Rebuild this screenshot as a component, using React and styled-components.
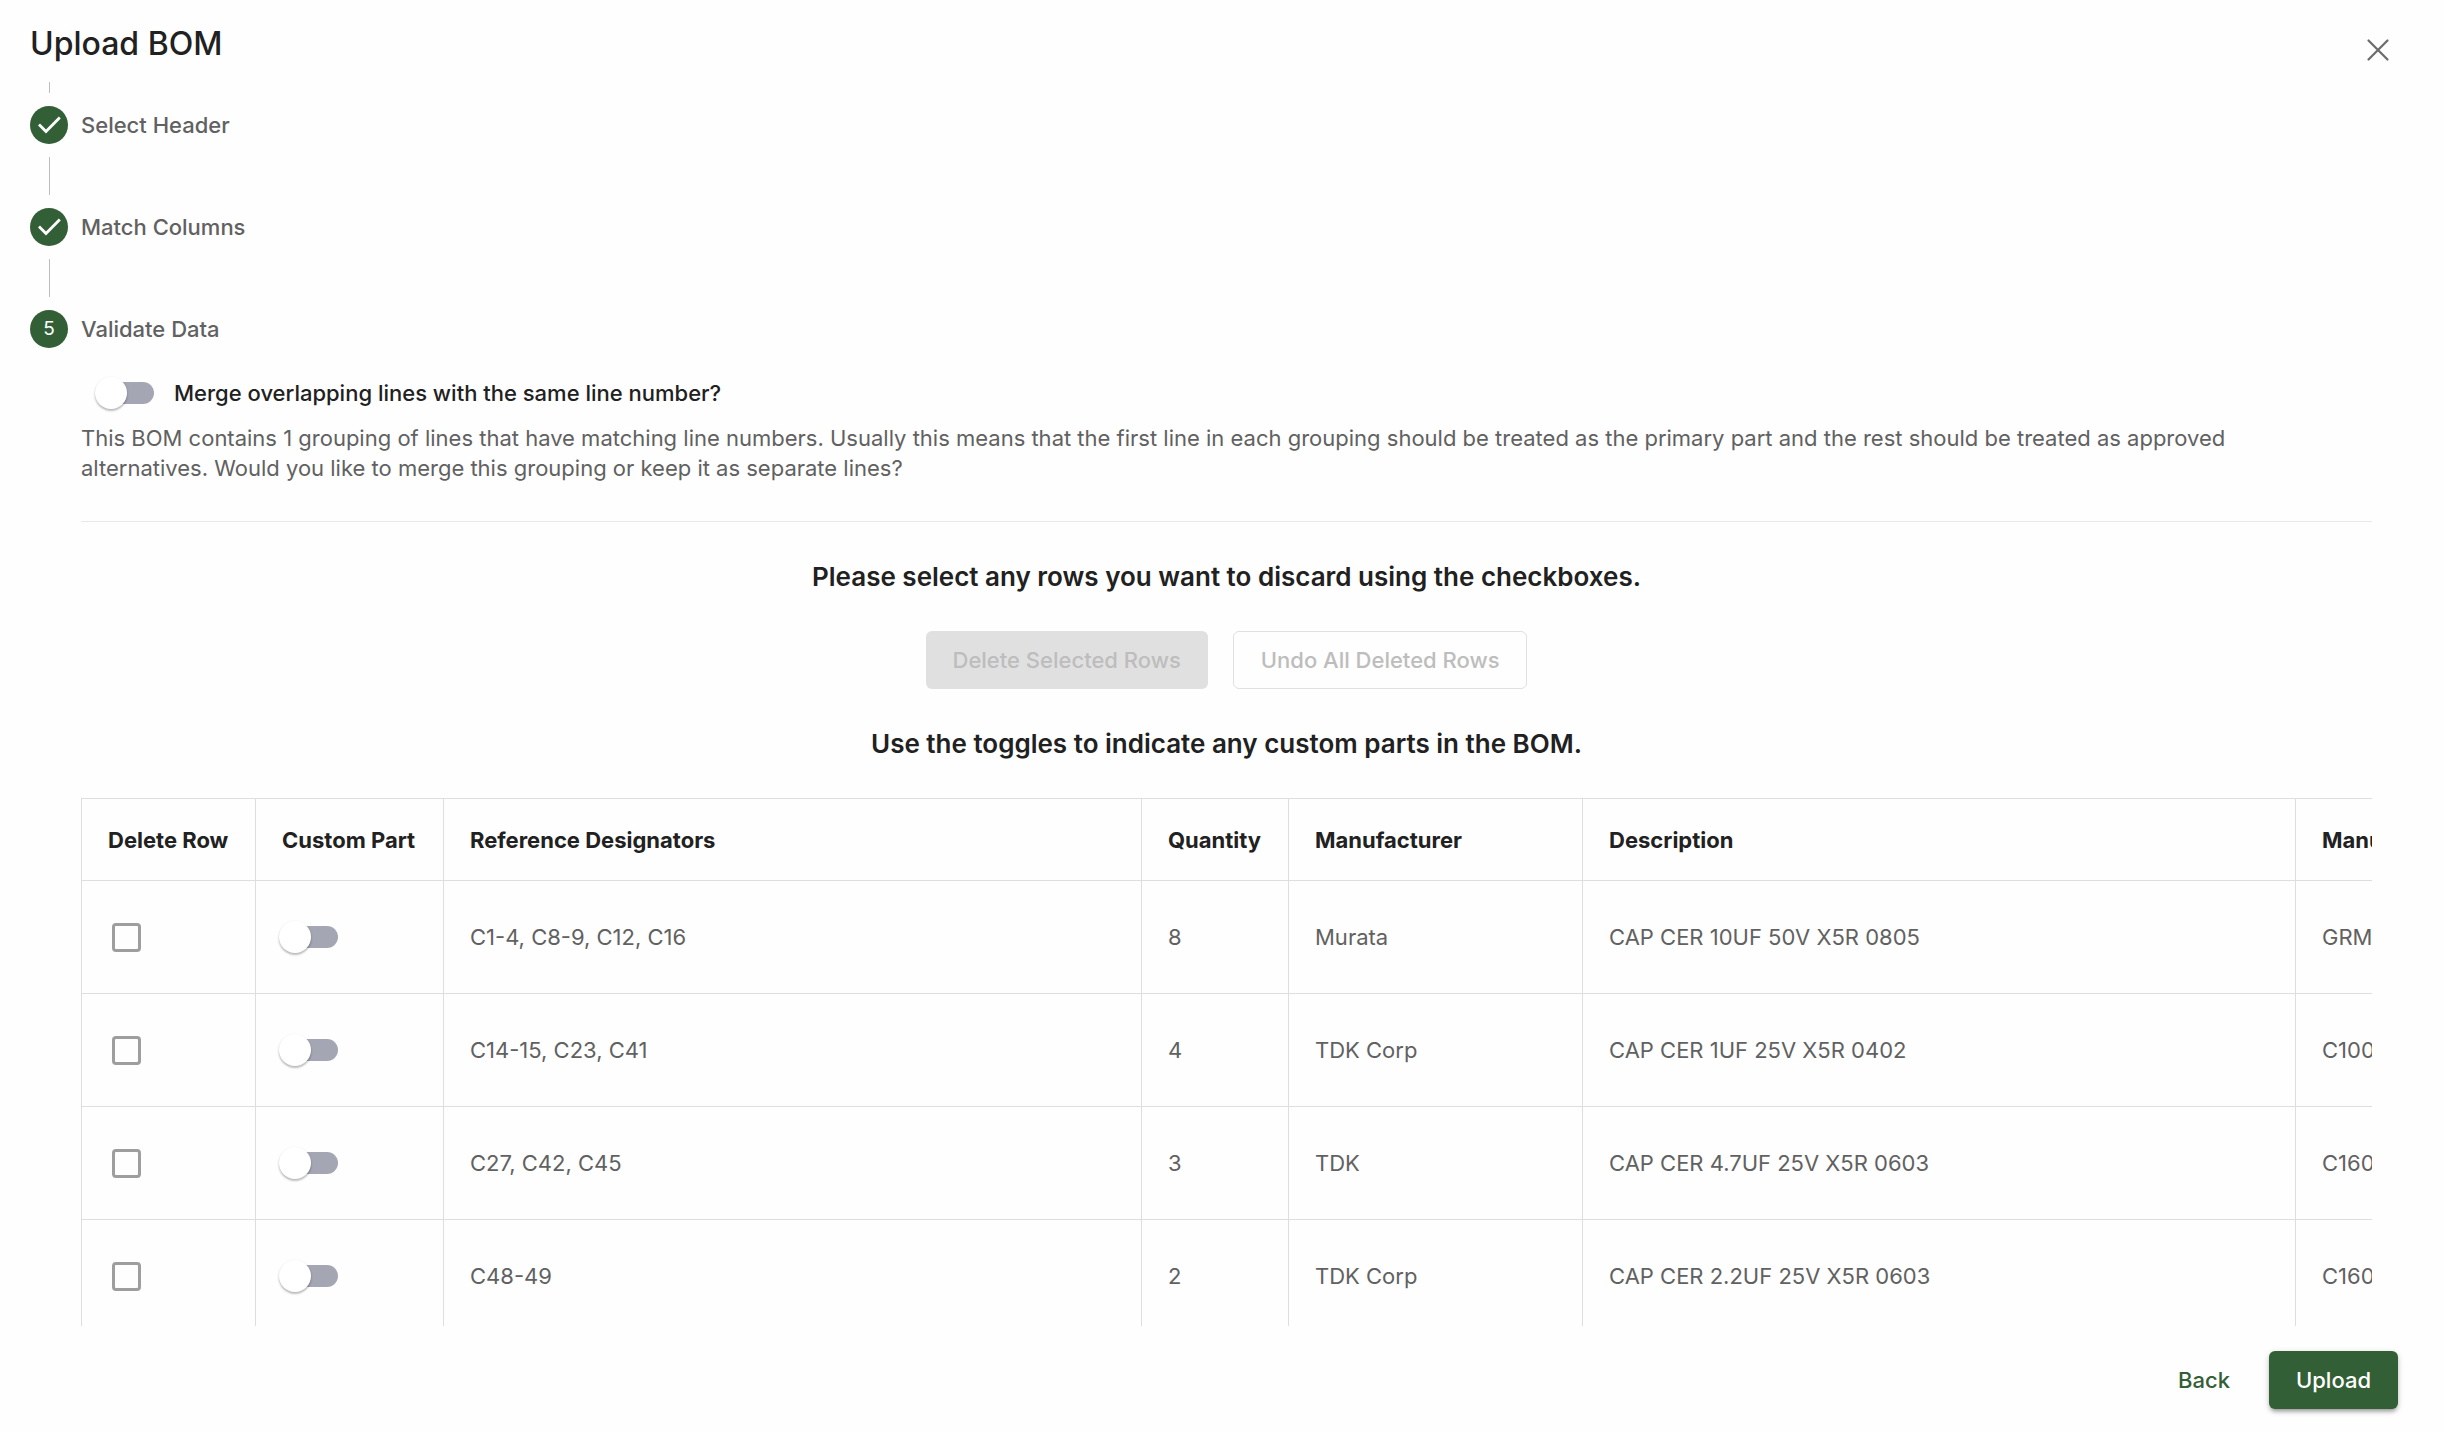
import React, { useState } from 'react';
import styled, { createGlobalStyle, css } from 'styled-components';

const GlobalStyle = createGlobalStyle`
	* {
		box-sizing: border-box;
	}

	body {
		margin: 0;
		background: #fefefe;
		color: #212121;
		font-family: Inter, 'Liberation Sans', sans-serif;
		font-size: 22px;
		line-height: 30px;
	}
`;

const Dialog = styled.div`
	height: 100vh;
	display: flex;
	flex-direction: column;
`;

const Header = styled.header`
	height: 82px;
	flex: none;
	display: flex;
	justify-content: space-between;
	align-items: flex-start;
	padding: 24px 46px 0 30px;
`;

const Title = styled.h1`
	margin: 0;
	font-size: 32px;
	font-weight: 500;
	line-height: 40px;
`;

const CloseButton = styled.button`
	width: 40px;
	height: 40px;
	display: flex;
	align-items: center;
	justify-content: center;
	margin-top: 6px;
	padding: 0;
	border: none;
	background: none;
	color: #6b6b6b;
	cursor: pointer;
`;

const Content = styled.main`
	flex: 1;
	min-height: 0;
	overflow: hidden;
	padding: 0 72px 0 30px;
`;

const Connector = styled.div`
	height: ${(props) => (props.$short ? 11 : 38)}px;
	width: 1px;
	margin-left: 19px;
	background: #bdbdbd;
`;

const Step = styled.div`
	display: flex;
	align-items: center;
	gap: 13px;
	padding: 13px 0;
	color: #616161;
	font-weight: 500;
`;

const StepIcon = styled.span`
	width: 38px;
	height: 38px;
	display: flex;
	align-items: center;
	justify-content: center;
	border-radius: 50%;
	background: #335f37;
	color: #fff;
	font-size: 19px;
	font-weight: 400;
`;

const Panel = styled.section`
	padding: 16px 0 0 51px;
`;

const MergeRow = styled.label`
	display: flex;
	align-items: center;
	gap: 20px;
	padding-left: 14px;
	font-weight: 500;
`;

const Switch = styled.input`
	appearance: none;
	position: relative;
	display: block;
	width: 59px;
	height: 32px;
	margin: 0;
	cursor: pointer;

	&::before {
		content: '';
		position: absolute;
		inset: 5px 0 5px 5px;
		border-radius: 11px;
		background: #a4a6b3;
	}

	&::after {
		content: '';
		position: absolute;
		top: 0;
		left: 0;
		width: 32px;
		height: 32px;
		border-radius: 50%;
		background: #fff;
		box-shadow: 0 2px 2px rgba(0, 0, 0, 0.2), 0 1px 3px rgba(0, 0, 0, 0.12);
	}

	&:checked::before {
		background: #8fae91;
	}

	&:checked::after {
		left: 27px;
		background: #335f37;
	}
`;

const Checkbox = styled.input`
	appearance: none;
	display: block;
	width: 29px;
	height: 29px;
	margin: 0 0 0 4px;
	border: 3px solid #9e9e9e;
	border-radius: 4px;
	cursor: pointer;

	&:checked {
		border-color: #335f37;
		background: #335f37;
	}
`;

const Note = styled.p`
	margin: 14px 0 38px;
	padding-right: 52px;
	color: #616161;
`;

const Divider = styled.hr`
	margin: 0;
	border: none;
	border-top: 1px solid #e8e8e8;
`;

const Instructions = styled.div`
	display: flex;
	flex-direction: column;
	align-items: center;
	gap: 36px;
	padding: 36px 0;
`;

const Subtitle = styled.h2`
	margin: 0;
	font-size: 26px;
	font-weight: 600;
	line-height: 37px;
`;

const Actions = styled.div`
	display: flex;
	align-items: flex-start;
	gap: 25px;
`;

const Button = styled.button`
	height: 58px;
	padding: 0 27px;
	border: none;
	border-radius: 6px;
	background: none;
	color: #335f37;
	font: inherit;
	font-weight: 500;
	cursor: pointer;

	${(props) =>
		props.$variant === 'contained' &&
		css`
			background: #335f37;
			color: #fff;
			box-shadow: 0 4px 4px -2px rgba(0, 0, 0, 0.3), 0 2px 6px rgba(0, 0, 0, 0.2);
		`}

	${(props) =>
		props.$variant === 'outlined' &&
		css`
			border: 1px solid #335f37;
		`}

	&:disabled {
		border-color: #e0e0e0;
		color: #bdbdbd;
		box-shadow: none;
		cursor: default;
		${(props) => props.$variant === 'contained' && 'background: #e0e0e0;'}
	}
`;

const TableWrap = styled.div`
	overflow: hidden;
`;

const Table = styled.table`
	width: 2660px;
	table-layout: fixed;
	border-collapse: separate;
	border-spacing: 0;
	border-top: 1px solid #dedede;
`;

const Col = styled.col`
	width: ${(props) => props.$width}px;
`;

const cell = css`
	padding: 0 26px;
	border-left: 1px solid #dedede;
	border-bottom: 1px solid #dedede;
	text-align: left;
	white-space: nowrap;
`;

const Th = styled.th`
	${cell}
	height: 82px;
	font-weight: 700;
`;

const Td = styled.td`
	${cell}
	height: 113px;
	color: #616161;

	${Switch} {
		margin-left: -3px;
	}
`;

const Footer = styled.footer`
	flex: none;
	display: flex;
	justify-content: flex-end;
	gap: 12px;
	padding: 25px 46px 23px;
`;

const columns = [
	{ label: 'Delete Row', width: 174 },
	{ label: 'Custom Part', width: 188 },
	{ label: 'Reference Designators', width: 698 },
	{ label: 'Quantity', width: 147 },
	{ label: 'Manufacturer', width: 294 },
	{ label: 'Description', width: 713 },
	{ label: 'Manufacturer Part Number', width: 446 },
];

const rows = [
	['C1-4, C8-9, C12, C16', '8', 'Murata', 'CAP CER 10UF 50V X5R 0805', 'GRM21BR61H106KE43L'],
	['C14-15, C23, C41', '4', 'TDK Corp', 'CAP CER 1UF 25V X5R 0402', 'C1005X5R1E105K050BC'],
	['C27, C42, C45', '3', 'TDK', 'CAP CER 4.7UF 25V X5R 0603', 'C1608X5R1E475K080AC'],
	['C48-49', '2', 'TDK Corp', 'CAP CER 2.2UF 25V X5R 0603', 'C1608X5R1E225K080AB'],
];

const CheckIcon = () => (
	<svg width="38" height="38" viewBox="0 0 38 38" fill="none" stroke="#fff" strokeWidth="2.8" aria-hidden="true">
		<path d="M9 18.4l7 7L29.8 11.6" />
	</svg>
);

const CloseIcon = () => (
	<svg width="24" height="24" viewBox="0 0 24 24" fill="none" stroke="currentColor" strokeWidth="2.2" strokeLinecap="round" aria-hidden="true">
		<path d="M2.5 2.5l19 19M21.5 2.5l-19 19" />
	</svg>
);

const App = () => {
	const [merge, setMerge] = useState(false);
	const [selected, setSelected] = useState([]);

	const toggleRow = (index) => {
		setSelected((prev) => (prev.includes(index) ? prev.filter((i) => i !== index) : [...prev, index]));
	};

	return (
		<>
			<GlobalStyle />
			<Dialog role="dialog" aria-labelledby="title">
				<Header>
					<Title id="title">Upload BOM</Title>
					<CloseButton type="button" aria-label="Close">
						<CloseIcon />
					</CloseButton>
				</Header>

				<Content>
					<Connector $short />
					<Step>
						<StepIcon>
							<CheckIcon />
						</StepIcon>
						Select Header
					</Step>
					<Connector />
					<Step>
						<StepIcon>
							<CheckIcon />
						</StepIcon>
						Match Columns
					</Step>
					<Connector />
					<Step>
						<StepIcon>5</StepIcon>
						Validate Data
					</Step>

					<Panel>
						<MergeRow>
							<Switch type="checkbox" role="switch" checked={merge} onChange={() => setMerge(!merge)} />
							Merge overlapping lines with the same line number?
						</MergeRow>
						<Note>
							This BOM contains 1 grouping of lines that have matching line numbers. Usually this means that the first line
							in each grouping should be treated as the primary part and the rest should be treated as approved
							alternatives. Would you like to merge this grouping or keep it as separate lines?
						</Note>
						<Divider />
						<Instructions>
							<Subtitle>Please select any rows you want to discard using the checkboxes.</Subtitle>
							<Actions>
								<Button type="button" $variant="contained" disabled={selected.length === 0}>
									Delete Selected Rows
								</Button>
								<Button type="button" $variant="outlined" disabled>
									Undo All Deleted Rows
								</Button>
							</Actions>
							<Subtitle>Use the toggles to indicate any custom parts in the BOM.</Subtitle>
						</Instructions>

						<TableWrap>
							<Table>
								<colgroup>
									{columns.map((col) => (
										<Col key={col.label} $width={col.width} />
									))}
								</colgroup>
								<thead>
									<tr>
										{columns.map((col) => (
											<Th key={col.label} scope="col">
												{col.label}
											</Th>
										))}
									</tr>
								</thead>
								<tbody>
									{rows.map((row, index) => (
										<tr key={row[0]}>
											<Td>
												<Checkbox
													type="checkbox"
													aria-label={`Delete ${row[0]}`}
													checked={selected.includes(index)}
													onChange={() => toggleRow(index)}
												/>
											</Td>
											<Td>
												<Switch type="checkbox" role="switch" aria-label={`Custom part ${row[0]}`} />
											</Td>
											{row.map((value) => (
												<Td key={value}>{value}</Td>
											))}
										</tr>
									))}
								</tbody>
							</Table>
						</TableWrap>
					</Panel>
				</Content>

				<Footer>
					<Button type="button">Back</Button>
					<Button type="button" $variant="contained">
						Upload
					</Button>
				</Footer>
			</Dialog>
		</>
	);
};

export default App;
